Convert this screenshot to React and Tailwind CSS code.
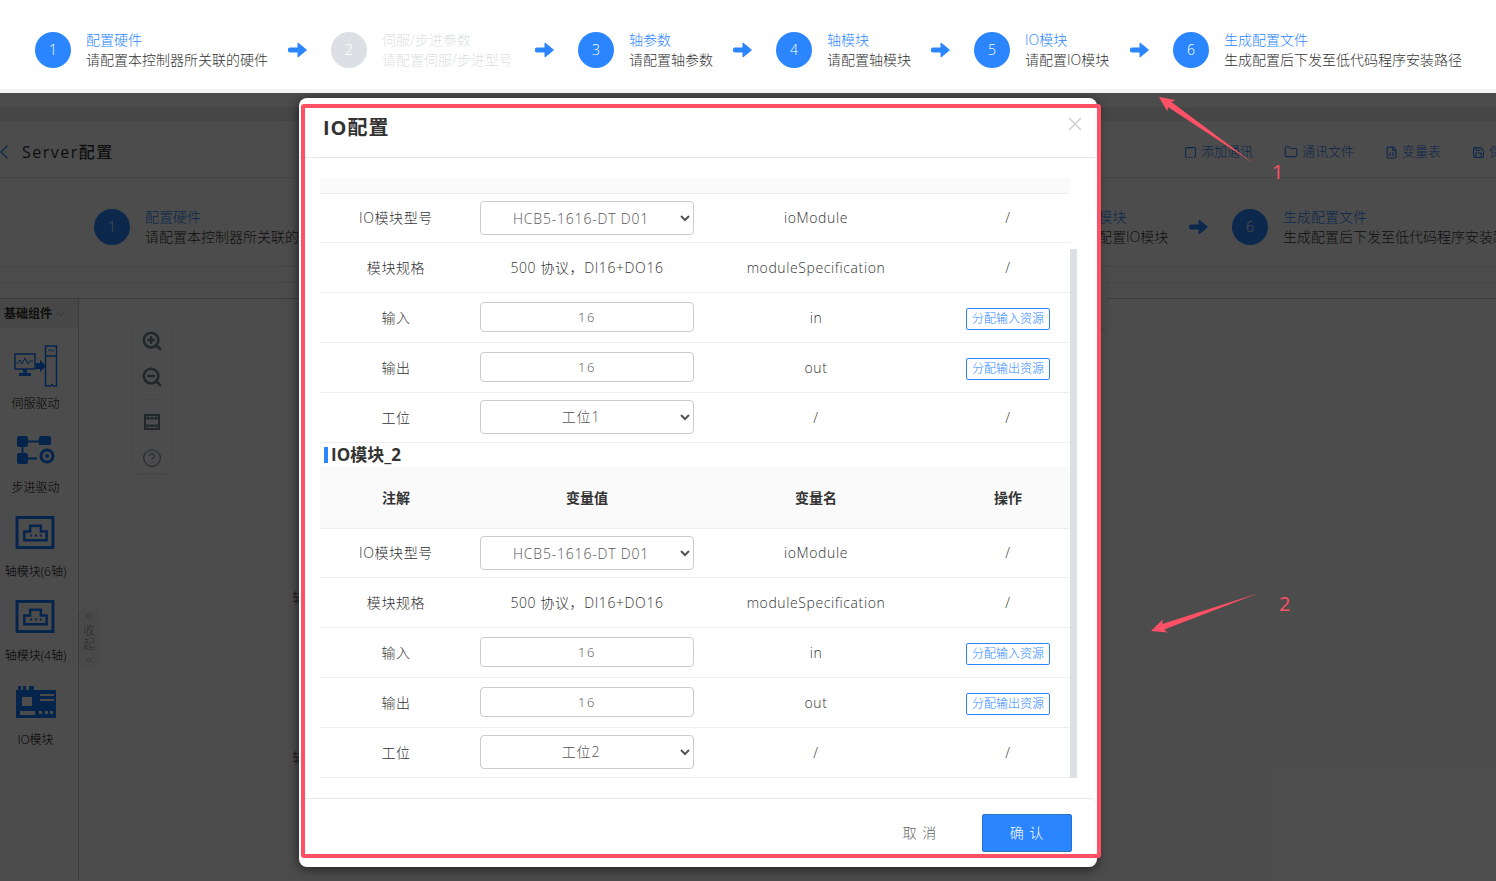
import { ChevronLeft, ChevronDown, ChevronsLeft, ZoomIn, ZoomOut, CircleHelp, X, Folder, FileCode, Save, SquareDashedBottom } from "lucide-react";

const steps = [
  { n: 1, title: "配置硬件", desc: "请配置本控制器所关联的硬件", w: "w-[182px]" },
  { n: 2, title: "伺服/步进参数", desc: "请配置伺服/步进型号", w: "w-[133px]", off: true },
  { n: 3, title: "轴参数", desc: "请配置轴参数", w: "w-[84px]" },
  { n: 4, title: "轴模块", desc: "请配置轴模块", w: "w-[84px]" },
  { n: 5, title: "IO模块", desc: "请配置IO模块", w: "w-[85px]" },
  { n: 6, title: "生成配置文件", desc: "生成配置后下发至低代码程序安装路径", w: "w-[240px]" },
];

const ArrowIcon = () => (
  <svg width="20" height="18" viewBox="0 0 20 18" className="shrink-0">
    <path d="M2 7h8V2l8.500 7L10 16v-5H2a2 2 0 0 1 0-4z" fill="#2b85ff" stroke="#2b85ff" strokeWidth="1" strokeLinejoin="round" />
  </svg>
);

const Steps = () => (
  <>
    {steps.map((s, i) => (
      <div key={s.n} className="flex items-center shrink-0">
        <div className={`w-9 h-9 rounded-full flex items-center justify-center text-white text-sm shrink-0 ${s.off ? "bg-[#dcdfe3]" : "bg-[#2b85ff]"}`}>
          {s.n}
        </div>
        <div className={`ml-[15px] shrink-0 text-sm leading-5 whitespace-nowrap ${s.w}`}>
          <div className={s.off ? "text-[#dcdfe3]" : "text-[#2b85ff]"}>{s.title}</div>
          <div className={s.off ? "text-[#dcdfe3]" : "text-[#333333]"}>{s.desc}</div>
        </div>
        {i < steps.length - 1 && (
          <div className="ml-5 mr-[23px]">
            <ArrowIcon />
          </div>
        )}
      </div>
    ))}
  </>
);

const ServoIcon = () => (
  <svg width="44" height="42" viewBox="0 0 44 42" fill="none" stroke="#0f7aff" strokeWidth="1.500">
    <rect x="1" y="9" width="20" height="15" />
    <path d="M3 19l3-4 2 4 3-6 3 6 2-3h3" strokeWidth="1" />
    <path d="M9 24h4v4h4v3H5v-3h4z" fill="#0f7aff" stroke="none" />
    <path d="M22 18h4v-3l6 6-6 6v-3h-4z" fill="#0f7aff" stroke="none" />
    <path d="M31.500 1h11v40h-3l-1.500-1.500-1.500 1.500h-5z" />
    <path d="M31.500 11h11" />
    <path d="M34 6l2-1.500 2 1.500 2-1" strokeWidth="1" />
  </svg>
);

const StepperIcon = () => (
  <svg width="38" height="28" viewBox="0 0 38 28" fill="#0f7aff">
    <rect x="0" y="0" width="11" height="11" rx="2" />
    <path d="M22 2a2 2 0 0 1 2-2h8a2 2 0 0 1 2 2v7H22z" />
    <rect x="0" y="17" width="11" height="11" rx="2" />
    <path d="M11 4.500h11v2H11zM4.500 11h2v6h-2zM11 21.500h9v2h-9z" />
    <circle cx="30" cy="20" r="6" fill="none" stroke="#0f7aff" strokeWidth="3" />
    <circle cx="30" cy="20" r="2" />
  </svg>
);

const AxisIcon = () => (
  <svg width="40" height="33" viewBox="0 0 40 34" fill="none" stroke="#0f7aff" className="-mt-[3px] -ml-[2px]">
    <rect x="1.500" y="1.500" width="37" height="31" strokeWidth="3" />
    <path d="M9 25V16h6v-6h11v6h6v9z" strokeWidth="2.500" />
    <path d="M15 20h2M20 20h2M25 20h2" strokeWidth="2" />
  </svg>
);

const IoIcon = () => (
  <svg width="40" height="32" viewBox="0 0 40 32">
    <path
      fill="#0f7aff"
      fillRule="evenodd"
      d="M0 32V4h2V0h3v4h2V0h3v4h3V0h5v4h22v28zM6 11v9h10v-9zM24 8v2h14V8zM24 13v2h14v-2zM4 25v4h15v-4zM23 25v3h3v-3zM29 25v3h3v-3zM34 25v3h3v-3z"
    />
  </svg>
);

const FilmIcon = () => (
  <svg width="16" height="16" viewBox="0 0 16 16" fill="none" stroke="#6f8590" strokeWidth="2">
    <rect x="1" y="1" width="14" height="14" />
    <path d="M1 4.500h14M1 11.500h14" />
    <path d="M4 11.500v3M8 11.500v3M12 11.500v3M4 1.500v3M8 1.500v3M12 1.500v3" strokeWidth="1" />
  </svg>
);

const sideItems = [
  { icon: <ServoIcon />, label: "伺服驱动" },
  { icon: <StepperIcon />, label: "步进驱动" },
  { icon: <AxisIcon />, label: "轴模块(6轴)" },
  { icon: <AxisIcon />, label: "轴模块(4轴)" },
  { icon: <IoIcon />, label: "IO模块" },
];

const Background = () => (
  <div className="bg-white h-[788px] overflow-hidden">
    <div className="h-[14px] bg-white" />
    <div className="h-[14px] bg-[#ececec]" />
    <div className="h-[57px] flex items-center pt-[6px] border-b border-[#e8e8e8]">
      <ChevronLeft size={24} className="text-[#2b85ff] -ml-2 shrink-0" strokeWidth={1.300} />
      <span className="ml-1.5 text-base tracking-[1.500px] text-[#333333] font-medium">Server配置</span>
      <div className="ml-auto w-[312px] shrink-0 flex items-center text-[13px] text-[#2b85ff] whitespace-nowrap overflow-hidden">
        <SquareDashedBottom size={13} className="shrink-0" />
        <span className="ml-1">添加通讯</span>
        <Folder size={14} className="ml-[31px] shrink-0" />
        <span className="ml-1">通讯文件</span>
        <FileCode size={13} className="ml-[31px] shrink-0" />
        <span className="ml-1">变量表</span>
        <Save size={13} className="ml-[31px] shrink-0" />
        <span className="ml-1">保存</span>
      </div>
    </div>
    <div className="h-[89px] flex items-start pt-[29px] pl-[94px] border-b border-[#e8e8e8] overflow-hidden">
      <Steps />
    </div>
    <div className="h-4 border-b border-[#e8e8e8]" />
    <div className="h-4 border-b border-[#c8c8c8]" />
    <div className="flex h-[583px]">
      <div className="w-[79px] shrink-0 border-r border-dotted border-[#999999]">
        <div className="h-[29px] bg-[#ededed] flex items-center pl-1 text-xs font-bold text-[#333333]">
          基础组件
          <ChevronDown size={14} className="text-[#cccccc] ml-0.5" />
        </div>
        <div className="pt-2">
          {sideItems.map((it, i) => (
            <div key={i} className="w-[71px] h-[84px] flex flex-col items-center">
              <div className="h-[60px] mb-[2px] flex items-center">{it.icon}</div>
              <div className="h-3 leading-3 text-xs text-black whitespace-nowrap">{it.label}</div>
            </div>
          ))}
        </div>
      </div>
      <div className="relative flex-1">
        <div className="absolute left-0 top-[311px] w-5 h-[57px] bg-[#f3f3f3] flex flex-col items-center text-xs leading-[14px] text-[#999999]">
          <ChevronsLeft size={12} className="text-[#bbbbbb]" />
          <span className="mt-[2px]">收</span>
          <span>起</span>
          <ChevronsLeft size={12} className="text-[#bbbbbb] mt-[2px]" />
        </div>
        <div className="absolute left-[55px] top-[21px] w-9 h-[153px] bg-[#ffffff] rounded-sm shadow flex flex-col items-center pt-[10px] text-[#6f8590]">
          <ZoomIn size={22} strokeWidth={2.800} />
          <ZoomOut size={22} strokeWidth={2.800} className="mt-[14px]" />
          <div className="w-5 border-b border-[#eeeeee] mt-[11px]" />
          <div className="mt-[14px]"><FilmIcon /></div>
          <CircleHelp size={20} strokeWidth={1.300} className="mt-[18px]" />
        </div>
        <span className="absolute left-[213px] top-[289px] text-sm text-[#333333]">轴模块</span>
        <span className="absolute left-[213px] top-[449px] text-sm text-[#333333]">轴模块</span>
        <div className="absolute left-[900px] -top-7 w-[128px] h-[57px] bg-white shadow" />
      </div>
    </div>
  </div>
);

const selectCls = "w-[214px] h-[34px] bg-white border border-[#cccccc] rounded text-sm tracking-[0.8px] text-[#555555] text-center [text-align-last:center]";
const inputCls = "w-[214px] h-[30px] mb-[2px] bg-white border border-[#cccccc] rounded text-[13px] tracking-[1.500px] text-[#555555] text-center";

const Row = ({ label, value, name, op, first }) => (
  <div className={`grid grid-cols-[152px_230px_228px_140px] items-center text-center text-sm tracking-[0.6px] text-[#333333] border-b border-[#eeeeee] ${first ? "h-[49px]" : "h-[50px]"}`}>
    <div>{label}</div>
    <div className="flex justify-center">{value}</div>
    <div>{name}</div>
    <div className="pl-4 flex justify-center">
      {op ? (
        <button className="w-[84px] h-[22px] mt-[2px] border border-[#2b85ff] rounded-[2px] text-xs tracking-normal text-[#2b85ff] bg-white">
          {op}
        </button>
      ) : (
        "/"
      )}
    </div>
  </div>
);

const Section = ({ station }) => (
  <>
    <Row
      first
      label="IO模块型号"
      name="ioModule"
      value={
        <select className={selectCls} defaultValue="HCB5-1616-DT D01">
          <option>HCB5-1616-DT D01</option>
        </select>
      }
    />
    <Row label="模块规格" name="moduleSpecification" value="500 协议，DI16+DO16" />
    <Row label="输入" name="in" op="分配输入资源" value={<input readOnly className={inputCls} defaultValue="16" />} />
    <Row label="输出" name="out" op="分配输出资源" value={<input readOnly className={inputCls} defaultValue="16" />} />
    <Row
      label="工位"
      name="/"
      value={
        <select className={`${selectCls} mb-[2px]`} defaultValue={station}>
          <option>{station}</option>
        </select>
      }
    />
  </>
);

const Modal = () => (
  <div className="absolute left-[299px] top-[98px] w-[798px] h-[769px] bg-white rounded-lg shadow-[0_2px_12px_rgba(0,0,0,0.6)] flex flex-col">
    <div className="h-[60px] shrink-0 border-b border-[#e8e8e8] flex items-center pl-6 pr-[11px]">
      <h2 className="text-xl font-bold tracking-[1px] text-[#333333]">IO配置</h2>
      <X size={22} strokeWidth={1.500} className="ml-auto -mt-[7px] text-[#cccccc]" />
    </div>
    <div className="flex pl-[21px] pt-5 pb-5 flex-1">
      <div className="w-[750px] shrink-0">
        <div className="h-4 bg-[#fafafa] border-b border-[#eeeeee]" />
        <Section station="工位1" />
        <div className="h-6 flex items-center pl-[4px] text-[17px] font-bold text-[#333333]">
          <span className="w-1 h-4 bg-[#2b85ff] mr-[3px]" />
          IO模块_2
        </div>
        <div className="h-[62px] bg-[#fafafa] border-b border-[#eeeeee] grid grid-cols-[152px_230px_228px_140px] items-center text-center text-sm font-bold text-[#333333]">
          <div>注解</div>
          <div>变量值</div>
          <div>变量名</div>
          <div className="pl-4">操作</div>
        </div>
        <Section station="工位2" />
      </div>
      <div className="w-[7px] mt-[71px] bg-[#dcdfe3]" />
    </div>
    <div className="h-[69px] shrink-0 border-t border-[#e8e8e8] rounded-t-lg flex justify-end gap-[17px] pt-[15px] pr-[25px]">
      <button className="w-[90px] h-[38px] text-sm tracking-[1px] text-[#666666]">取 消</button>
      <button className="w-[90px] h-[38px] text-sm tracking-[1px] text-white bg-[#2b85ff] border border-[#2a72c8] rounded-[2px]">确 认</button>
    </div>
  </div>
);

const Annotations = () => (
  <>
    <div className="absolute left-[947px] top-[13px] w-[204px] h-[77px] border-[3px] border-[#ff5066] rounded-[3px]" />
    <div className="absolute left-[301px] top-[104px] w-[800px] h-[754px] border-4 border-[#ff5066] rounded-[3px]" />
    <svg width="1496" height="881" className="absolute left-0 top-0 pointer-events-none">
      <polygon points="1159,97 1167.300,111.300 1168,107 1253,163 1171.400,102 1175.300,99.900" fill="#ff5066" />
      <polygon points="1151,631 1167.400,632.600 1164.300,629.500 1259,593 1162.300,623.900 1162.800,619.400" fill="#ff5066" />
    </svg>
    <span className="absolute left-[1272px] top-[160px] text-xl leading-6 font-normal text-[#ff5066]">1</span>
    <span className="absolute left-[1279px] top-[592px] text-xl leading-6 font-normal text-[#ff5066]">2</span>
  </>
);

export default function App() {
  return (
    <div className="relative w-[1496px] h-[881px] overflow-hidden bg-white font-['Open_Sans','Noto_Sans_CJK_SC',sans-serif] font-light">
      <div className="relative z-10 h-[93px] bg-white border-b-4 border-[#f4f4f4] flex items-start pt-[30px] pl-[35px] overflow-hidden">
        <Steps />
      </div>
      <Background />
      <div className="absolute left-0 top-[93px] right-0 bottom-0 bg-black/70" />
      <Modal />
      <Annotations />
    </div>
  );
}
